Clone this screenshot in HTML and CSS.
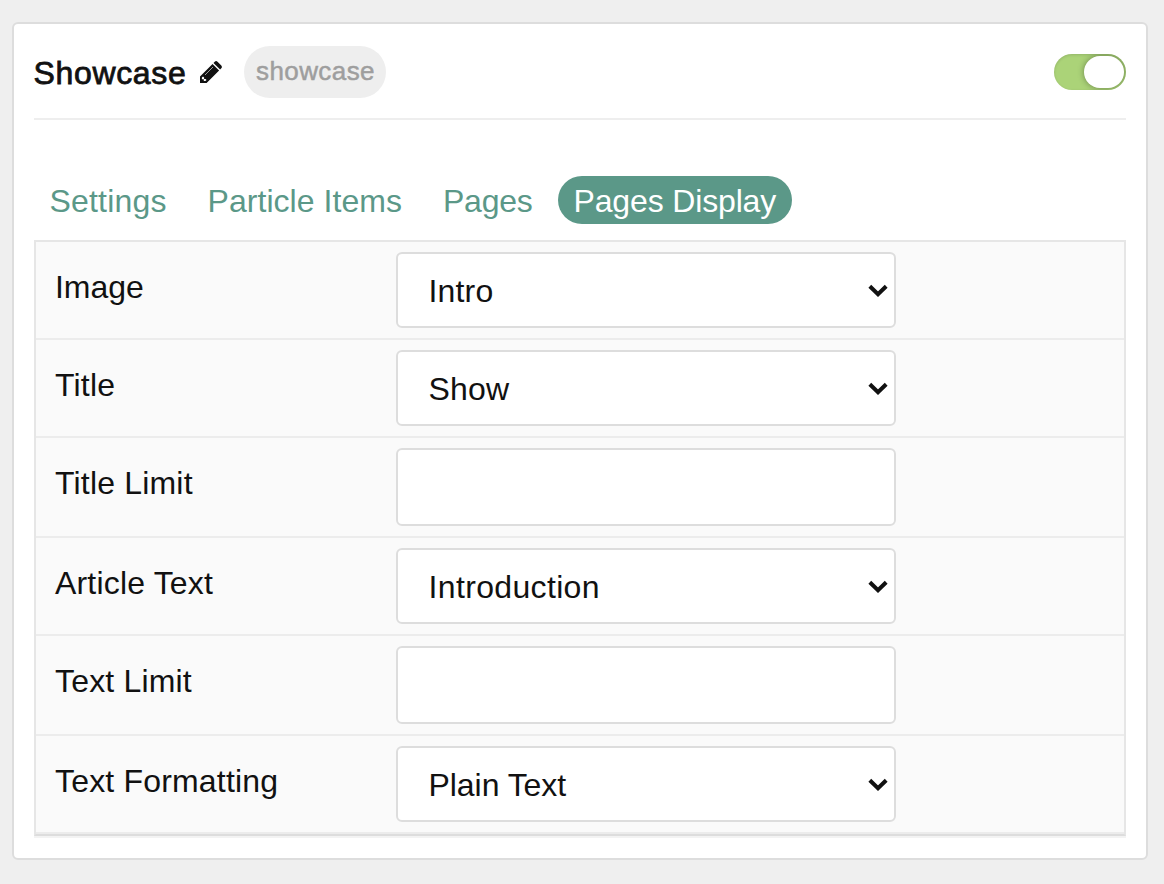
FILE: index.html
```html
<!DOCTYPE html>
<html lang="en">
<head>
<meta charset="utf-8">
<title>Showcase</title>
<link rel="stylesheet" href="styles.css">
</head>
<body>
<svg width="0" height="0" class="defs"><symbol id="chevron" viewBox="0 0 20 14"><path d="M1.800 2.200 10 10.200l8.200-8" fill="none" stroke="#111" stroke-width="4"/></symbol></svg>
<main class="card">
  <header class="card-header">
    <h1 class="title">Showcase</h1>
    <svg class="pencil" viewBox="0 0 22 22"><path fill="#111" d="M0 22V15.400L12.500 2.900 19.100 9.500 6.600 22ZM13.500 1.900 14.700.7Q16.100-.5 17.500.7L21.300 4.500Q22.500 5.900 21.300 7.300L20.100 8.500Z"/><path fill="#fff" d="M1.900 16.600 3 15.500 4.100 16.400V17.900H5.600L6.500 19 5.400 20.100H3.800V18.200H1.900Z"/><path d="M5 14 13 6" stroke="#fff" stroke-width=".6"/></svg>
    <span class="badge">showcase</span>
    <span class="toggle"><span class="knob"></span></span>
  </header>
  <nav class="tabs">
    <a class="tab settings">Settings</a>
    <a class="tab items">Particle Items</a>
    <a class="tab pages">Pages</a>
    <a class="tab active">Pages Display</a>
  </nav>
  <section class="fields">
    <div class="row"><label class="label tight">Image</label><div class="control select"><span>Intro</span><svg class="chevron"><use href="#chevron"/></svg></div></div>
    <div class="row"><label class="label">Title</label><div class="control select"><span>Show</span><svg class="chevron"><use href="#chevron"/></svg></div></div>
    <div class="row"><label class="label">Title Limit</label><input class="control input" type="text"></div>
    <div class="row"><label class="label">Article Text</label><div class="control select"><span class="wide">Introduction</span><svg class="chevron"><use href="#chevron"/></svg></div></div>
    <div class="row"><label class="label">Text Limit</label><input class="control input" type="text"></div>
    <div class="row"><label class="label">Text Formatting</label><div class="control select"><span class="tight">Plain Text</span><svg class="chevron"><use href="#chevron"/></svg></div></div>
  </section>
</main>
</body>
</html>
```
FILE: styles.css
```css
* { box-sizing: border-box; }
body {
  margin: 0;
  height: 884px;
  padding: 22px 16px 24px 12px;
  background: #efefef;
  color: #111;
  font: 32px/48px "Liberation Sans", Arial, sans-serif;
  letter-spacing: .18px;
}
.defs { display: block; height: 0; }
.card {
  height: 838px;
  padding: 0 20px;
  background: #fff;
  border: 2px solid #ddd;
  border-radius: 6px;
}
.card-header {
  display: flex;
  align-items: center;
  height: 96px;
  padding-top: 2px;
  border-bottom: 2px solid #eee;
}
.title {
  width: 165px;
  margin: 1px 0 0 -.5px;
  font-size: 32px;
  font-weight: 400;
  letter-spacing: .65px;
  -webkit-text-stroke: .8px #111;
}
.pencil { width: 22px; height: 22px; margin: 0 22.5px 1px 1px; }
.badge {
  width: 142px;
  height: 52px;
  padding-left: 1px;
  border-radius: 26px;
  background: #eee;
  color: #9e9e9e;
  font-size: 26px;
  line-height: 51px;
  letter-spacing: .4px;
  text-align: center;
  -webkit-text-stroke: .5px #9e9e9e;
}
.toggle {
  display: flex;
  justify-content: flex-end;
  width: 72px;
  height: 36px;
  margin-left: auto;
  padding: 2px;
  border-radius: 18px;
  background: #abd378;
  box-shadow: inset 0 1px 3px rgba(0, 0, 0, .14);
  overflow: hidden;
}
.knob {
  width: 40px;
  height: 32px;
  border-radius: 16px;
  background: #fff;
  box-shadow: 0 0 6px rgba(0, 0, 0, .38);
}
.tabs { display: flex; gap: 10px; padding: 56px 0 16px; }
.tab {
  height: 48px;
  padding: 1px 0 0 15.500px;
  border-radius: 24px;
  color: #5b9888;
  white-space: nowrap;
}
.settings { width: 148px; }
.items { width: 225px; letter-spacing: .05px; }
.pages { width: 121px; padding-left: 16px; letter-spacing: -.25px; }
.tab.active { width: 234px; background: #5b9888; color: #fff; letter-spacing: -.15px; }
.fields {
  border: 2px solid #e6e6e6;
  border-bottom-color: #ddd;
  background: #fafafa;
  box-shadow: 0 2px 0 #f3f3f3;
}
.row {
  display: flex;
  align-items: flex-start;
  padding: 10px 0 10px 19px;
  border-bottom: 2px solid #ececec;
}
.label { width: 341px; padding-top: 11px; }
.tight { letter-spacing: -.05px; }
.wide { letter-spacing: .35px; }
.control {
  width: 500px;
  border: 2px solid #ddd;
  border-radius: 6px;
  background: #fff;
}
.select {
  display: flex;
  align-items: center;
  justify-content: space-between;
  height: 76px;
  padding: 2px 6px 0 30.500px;
}
.input { height: 78px; padding: 0 30px; font: inherit; outline: 0; }
.chevron { width: 20px; height: 14px; }
```
